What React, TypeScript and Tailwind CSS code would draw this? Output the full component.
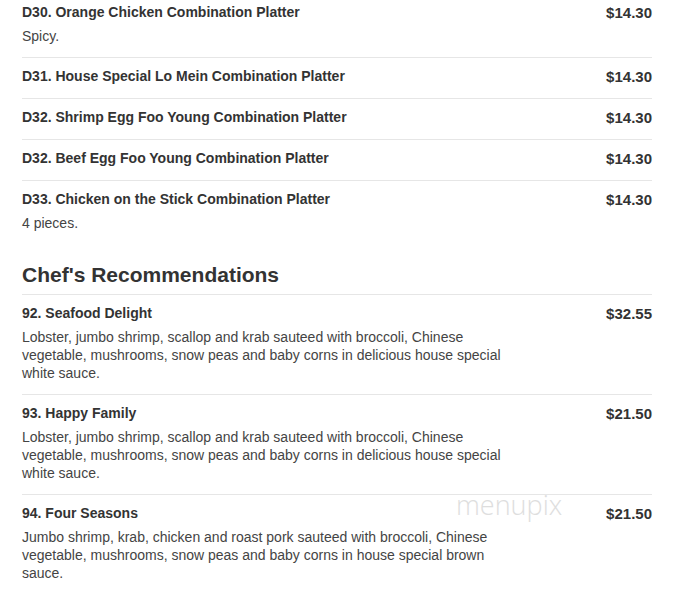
import React from "react";

type Item = { name: string; price: string; desc?: string };

const combos: Item[] = [
  { name: "D30. Orange Chicken Combination Platter", price: "$14.30", desc: "Spicy." },
  { name: "D31. House Special Lo Mein Combination Platter", price: "$14.30" },
  { name: "D32. Shrimp Egg Foo Young Combination Platter", price: "$14.30" },
  { name: "D32. Beef Egg Foo Young Combination Platter", price: "$14.30" },
  { name: "D33. Chicken on the Stick Combination Platter", price: "$14.30", desc: "4 pieces." },
];

const chef: Item[] = [
  {
    name: "92. Seafood Delight",
    price: "$32.55",
    desc: "Lobster, jumbo shrimp, scallop and krab sauteed with broccoli, Chinese vegetable, mushrooms, snow peas and baby corns in delicious house special white sauce.",
  },
  {
    name: "93. Happy Family",
    price: "$21.50",
    desc: "Lobster, jumbo shrimp, scallop and krab sauteed with broccoli, Chinese vegetable, mushrooms, snow peas and baby corns in delicious house special white sauce.",
  },
  {
    name: "94. Four Seasons",
    price: "$21.50",
    desc: "Jumbo shrimp, krab, chicken and roast pork sauteed with broccoli, Chinese vegetable, mushrooms, snow peas and baby corns in house special brown sauce.",
  },
];

function Row({ item, last }: { item: Item; last: boolean }) {
  return (
    <div className={"flex justify-between pt-[8px] pb-[11px] " + (last ? "" : "border-b border-[#e6e6e6]")}>
      <div className="w-[505px]">
        <div className="text-[14px] leading-[21px] font-bold text-[#333]">{item.name}</div>
        {item.desc && (
          <div className="mt-[4px] mb-[1px] text-[14px] leading-[18px] text-[#444]">{item.desc}</div>
        )}
      </div>
      <div className="text-[15px] leading-[21px] font-bold text-[#333]">{item.price}</div>
    </div>
  );
}

export default function App() {
  return (
    <div className="relative w-[689px] h-[590px] overflow-hidden bg-white" style={{ fontFamily: '"Liberation Sans", Arial, sans-serif' }}>
      <div className="mt-[-6px] pl-[22px] w-[652px]">
        {combos.map((it, i) => (
          <Row key={i} item={it} last={i === combos.length - 1} />
        ))}
        <h2 className="mt-[19px] pb-[7px] border-b border-[#e6e6e6] text-[21px] leading-[24px] font-bold text-[#333]">
          Chef's Recommendations
        </h2>
        {chef.map((it, i) => (
          <Row key={i} item={it} last={i === chef.length - 1} />
        ))}
      </div>
      <div className="absolute left-[456px] top-[489px] text-[27px] leading-[32px] text-[#dedede]" style={{ fontFamily: '"Open Sans", sans-serif', fontWeight: 300 }}>
        menupix
      </div>
    </div>
  );
}
